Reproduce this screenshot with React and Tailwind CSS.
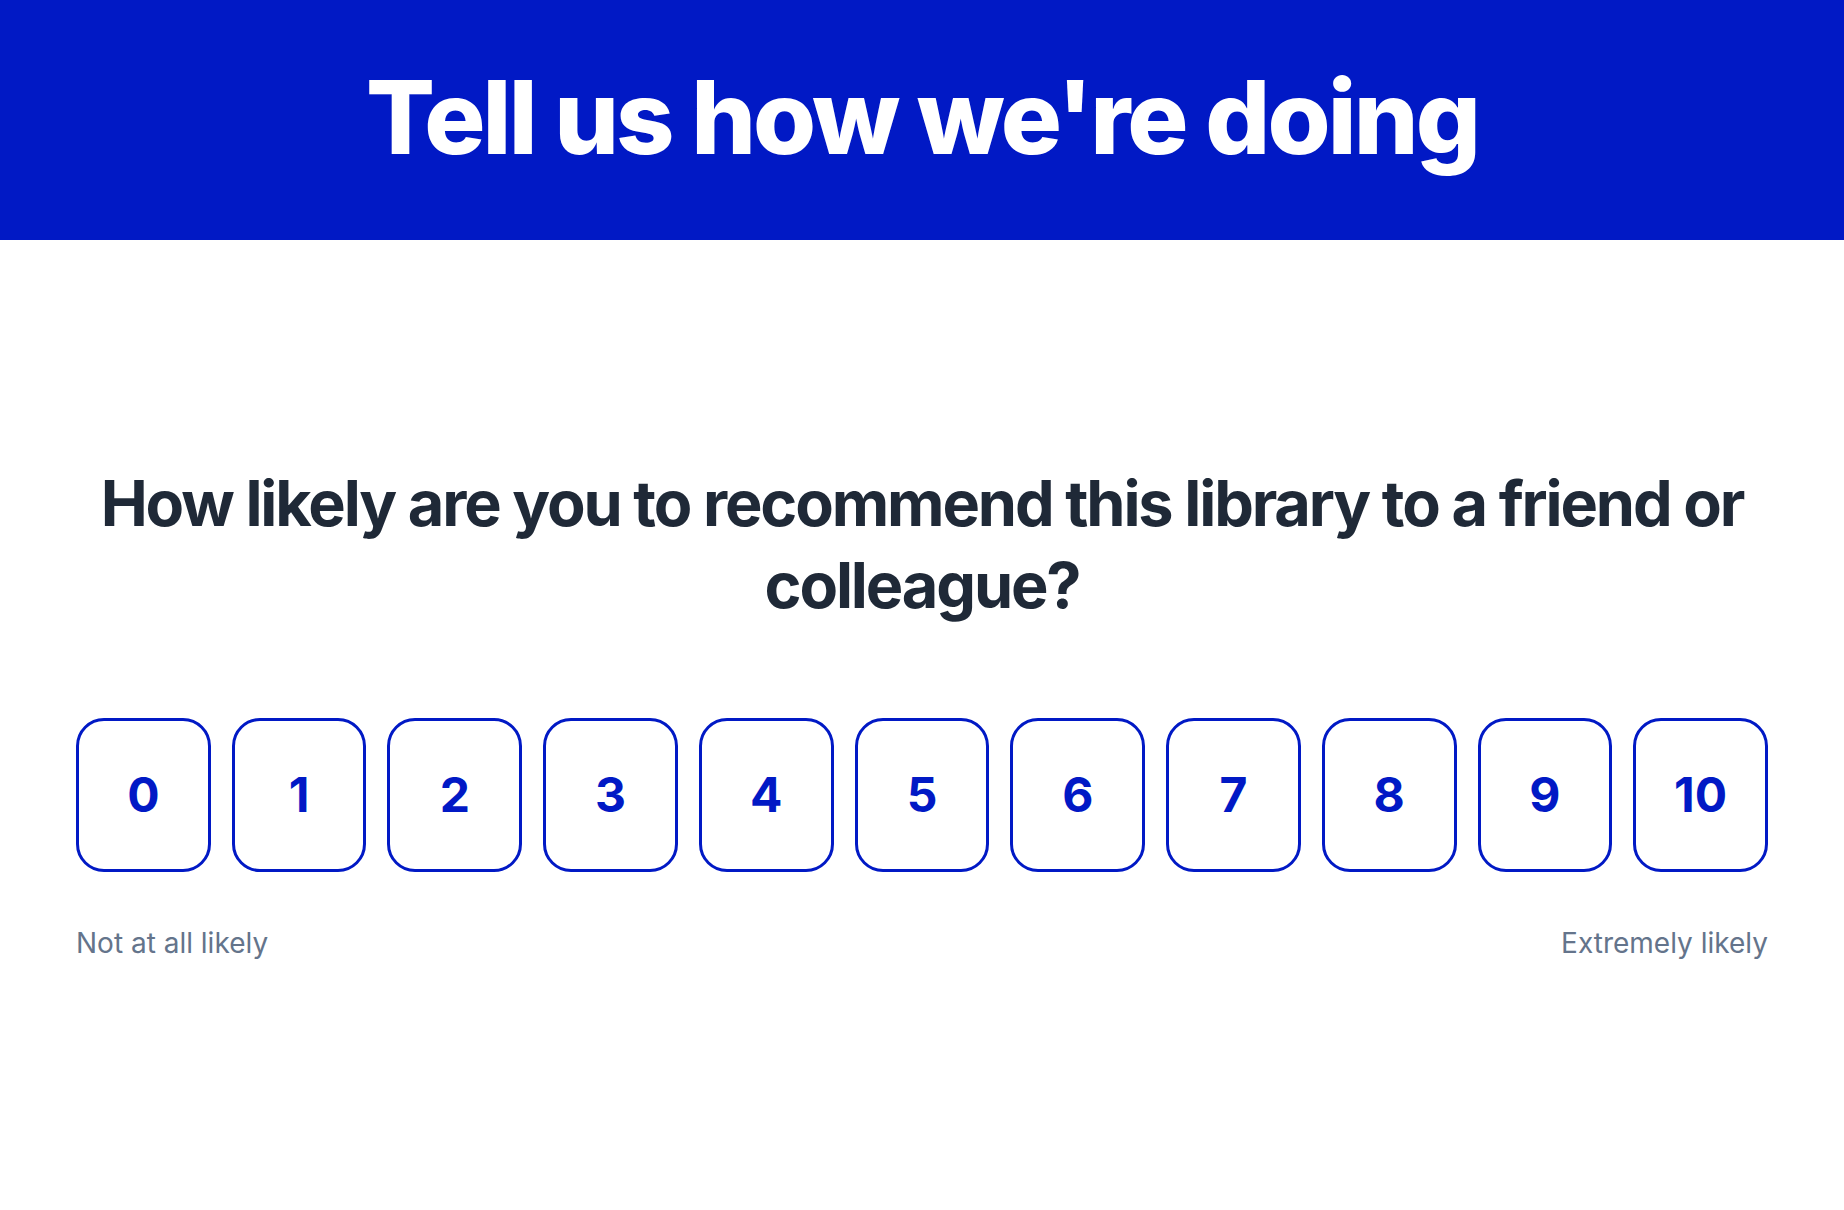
import React, { useState } from 'react';

const scores = [0, 1, 2, 3, 4, 5, 6, 7, 8, 9, 10];

function App() {
  const [picked, setPicked] = useState(null);

  return (
    <div className="min-h-screen bg-white" style={{ fontFamily: 'Inter, "Noto Sans", sans-serif' }}>
      <header className="h-[240px] bg-[#0119c5] flex items-center justify-center">
        <h1 className="text-white text-[102px] font-extrabold tracking-[-0.028em] leading-none pb-[6px]">
          Tell us how we're doing
        </h1>
      </header>

      <main className="px-[76px] pt-[222px]">
        <h2 className="text-center text-[#1f2937] text-[63px] font-bold tracking-[-0.034em] leading-[82px]">
          How likely are you to recommend this library to a friend or colleague?
        </h2>

        <div className="grid grid-cols-11 gap-[21px] mt-[92px]">
          {scores.map((n) => (
            <button
              key={n}
              onClick={() => setPicked(n)}
              className={
                'h-[154px] rounded-[28px] border-[3px] border-[#0119c5] flex items-center justify-center text-[48px] font-bold ' +
                (picked === n ? 'bg-[#0119c5] text-white' : 'bg-white text-[#0119c5]')
              }
            >
              {n}
            </button>
          ))}
        </div>

        <div className="flex justify-between mt-[50px] text-[28px] text-[#64748b]">
          <span>Not at all likely</span>
          <span>Extremely likely</span>
        </div>
      </main>
    </div>
  );
}

export default App;
